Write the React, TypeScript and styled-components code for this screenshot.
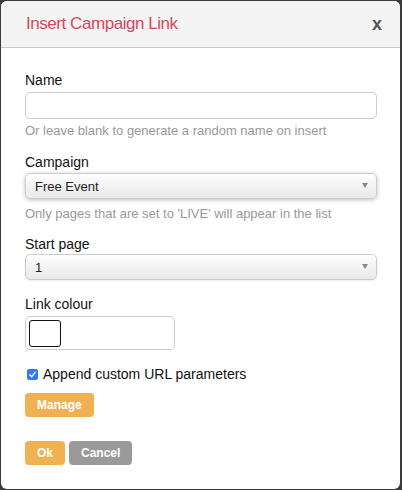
import { ReactElement } from "react";
import styled, { createGlobalStyle } from "styled-components";

const GlobalStyle = createGlobalStyle`
  html, body {
    margin: 0;
    padding: 0;
    background: #3b3d3c;
  }
  body {
    font-family: "Liberation Sans", Arial, sans-serif;
  }
`;

const Backdrop = styled.div`
  width: 402px;
  height: 490px;
  padding: 1px 2px 1px 1px;
  box-sizing: border-box;
`;

const Dialog = styled.div`
  width: 399px;
  height: 488px;
  background: #fff;
  border-radius: 6px;
  overflow: hidden;
  display: flex;
  flex-direction: column;
`;

const Header = styled.div`
  height: 46px;
  background: #f4f4f4;
  border-bottom: 1px solid #c8c8c8;
  display: flex;
  align-items: center;
  justify-content: space-between;
  padding: 0 18px 0 25px;
`;

const Title = styled.h3`
  margin: 0;
  font-size: 17px;
  font-weight: normal;
  color: #d4485f;
  letter-spacing: -0.45px;
`;

const Close = styled.span`
  font-size: 18px;
  font-weight: bold;
  color: #555;
  cursor: pointer;
`;

const Body = styled.div`
  padding: 22px 25px 0 24px;
  display: flex;
  flex-direction: column;
`;

const Label = styled.label<{ $gap?: number }>`
  display: block;
  font-size: 14px;
  line-height: 20px;
  color: #111;
  margin-top: ${(p) => p.$gap ?? 0}px;
`;

const TextInput = styled.input`
  margin-top: 2px;
  height: 27px;
  box-sizing: border-box;
  border: 1px solid #ccc;
  border-radius: 5px;
  width: 352px;
  font-size: 14px;
  padding: 0 8px;
`;

const Help = styled.div<{ $gap: number }>`
  font-size: 13px;
  line-height: 18px;
  color: #999;
  margin-top: ${(p) => p.$gap}px;
`;

const Select = styled.div<{ $focused?: boolean; $gap: number }>`
  position: relative;
  margin-top: ${(p) => p.$gap}px;
  width: 352px;
  height: 26px;
  box-sizing: border-box;
  border: 1px solid #ccc;
  border-radius: 5px;
  background: linear-gradient(#fff 0%, #f3f3f3 50%, #e9e9e9 100%);
  box-shadow: ${(p) =>
    p.$focused ? "0 1px 4px rgba(0,0,0,0.25)" : "0 1px 2px rgba(0,0,0,0.08)"};
  font-size: 13px;
  color: #222;
  display: flex;
  align-items: center;
  padding: 1px 9px 0;
`;

const Arrow = styled.span`
  position: absolute;
  right: 8px;
  top: 9px;
  width: 0;
  height: 0;
  border-left: 3px solid transparent;
  border-right: 3px solid transparent;
  border-top: 5px solid #888;
`;

const ColourField = styled.div`
  margin-top: 2px;
  width: 150px;
  height: 34px;
  box-sizing: border-box;
  border: 1px solid #ccc;
  border-radius: 5px;
  padding: 3px;
`;

const Swatch = styled.div`
  width: 32px;
  height: 27px;
  box-sizing: border-box;
  border: 1px solid #111;
  border-radius: 3px;
  background: #fff;
`;

const CheckRow = styled.label`
  margin-top: 14px;
  display: flex;
  align-items: center;
  gap: 5px;
  font-size: 14px;
  line-height: 20px;
  color: #111;
`;

const Check = styled.span`
  width: 11px;
  height: 11px;
  margin-left: 2px;
  border-radius: 2px;
  background: #3478f6;
  display: flex;
  align-items: center;
  justify-content: center;
`;

const Button = styled.button<{ $grey?: boolean }>`
  height: 24px;
  padding: 0 12px;
  border: none;
  border-radius: 4px;
  background: ${(p) => (p.$grey ? "#9a9a9a" : "#f0b152")};
  color: #fff;
  font-family: "Liberation Sans", Arial, sans-serif;
  font-size: 12px;
  font-weight: bold;
  cursor: pointer;
`;

const ManageRow = styled.div`
  margin-top: 9px;
  display: flex;
`;

const Actions = styled.div`
  margin-top: 24px;
  display: flex;
  gap: 4px;
`;

function App(): ReactElement {
  return (
    <Backdrop>
      <GlobalStyle />
      <Dialog>
        <Header>
          <Title>Insert Campaign Link</Title>
          <Close>x</Close>
        </Header>
        <Body>
          <Label>Name</Label>
          <TextInput type="text" />
          <Help $gap={3}>Or leave blank to generate a random name on insert</Help>
          <Label $gap={12}>Campaign</Label>
          <Select $focused $gap={1}>
            Free Event
            <Arrow />
          </Select>
          <Help $gap={6}>Only pages that are set to 'LIVE' will appear in the list</Help>
          <Label $gap={11}>Start page</Label>
          <Select $gap={0}>
            1
            <Arrow />
          </Select>
          <Label $gap={14}>Link colour</Label>
          <ColourField>
            <Swatch />
          </ColourField>
          <CheckRow>
            <Check>
              <svg width="9" height="9" viewBox="0 0 10 10">
                <path
                  d="M2 5.2 L4.2 7.4 L8 2.6"
                  fill="none"
                  stroke="#fff"
                  strokeWidth="1.6"
                  strokeLinecap="round"
                  strokeLinejoin="round"
                />
              </svg>
            </Check>
            Append custom URL parameters
          </CheckRow>
          <ManageRow>
            <Button>Manage</Button>
          </ManageRow>
          <Actions>
            <Button>Ok</Button>
            <Button $grey>Cancel</Button>
          </Actions>
        </Body>
      </Dialog>
    </Backdrop>
  );
}

export default App;
